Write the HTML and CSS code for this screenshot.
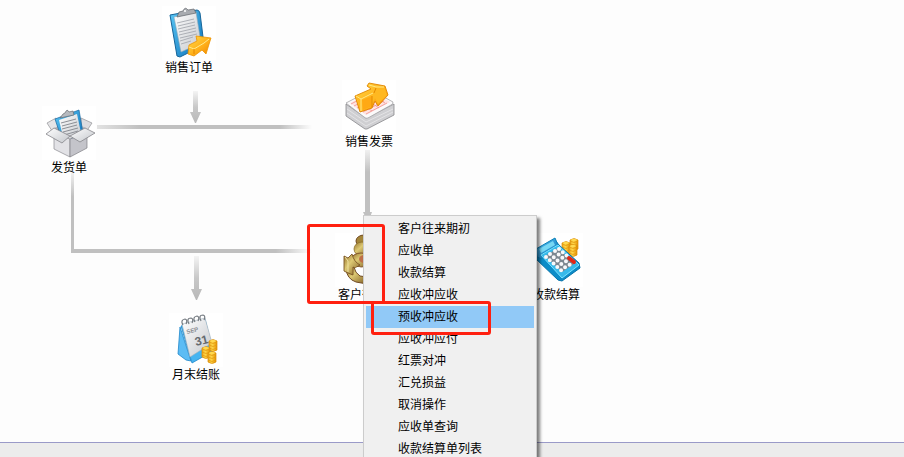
FILE: index.html
```html
<!DOCTYPE html>
<html lang="zh-CN">
<head>
    <meta charset="UTF-8">
    <meta name="viewport" content="width=device-width, initial-scale=1.0">
    <title>销售管理</title>
    <link rel="stylesheet" href="styles.css">
</head>
<body>
    <main class="canvas">
        <!-- Flow lines between the steps -->
        <svg class="connectors" width="620" height="400" aria-hidden="true">
            <defs>
                <linearGradient id="fade-h" gradientUnits="userSpaceOnUse" x1="97" y1="0" x2="312" y2="0">
                    <stop offset="0" stop-color="#e2e2e2"/><stop offset=".2" stop-color="#c0c0c0"/>
                    <stop offset=".85" stop-color="#c0c0c0"/><stop offset="1" stop-color="#fdfdfd"/>
                </linearGradient>
                <linearGradient id="fade-end" gradientUnits="userSpaceOnUse" x1="71" y1="0" x2="312" y2="0">
                    <stop offset=".85" stop-color="#c0c0c0"/><stop offset="1" stop-color="#fdfdfd"/>
                </linearGradient>
                <linearGradient id="fade-v" x1="0" y1="0" x2="0" y2="1">
                    <stop offset="0" stop-color="#f4f4f4"/><stop offset=".5" stop-color="#c8c8c8"/><stop offset="1" stop-color="#b8b8b8"/>
                </linearGradient>
                <linearGradient id="fade-top" x1="0" y1="0" x2="0" y2="1">
                    <stop offset="0" stop-color="#f0f0f0"/><stop offset=".3" stop-color="#c0c0c0"/>
                </linearGradient>
            </defs>
            <rect x="97" y="125" width="215" height="4" fill="url(#fade-h)"/>
            <path d="M193 91h5v21h3l-5 11h-1l-5-11h3z" fill="url(#fade-v)"/>
            <rect x="71" y="173" width="3" height="79" fill="url(#fade-top)"/>
            <rect x="71" y="249" width="241" height="4" fill="url(#fade-end)"/>
            <path d="M194 256h5v33h3l-5 11h-1l-5-11h3z" fill="url(#fade-v)"/>
            <path d="M365 150h5v62h2l-4 11-5-11h2z" fill="url(#fade-top)"/>
        </svg>

        <button type="button" class="node node-order">
            <svg class="icon" viewBox="0 0 54 54" aria-hidden="true">
                <defs>
                    <linearGradient id="blue" x1="0" y1="0" x2="1" y2="1"><stop offset="0" stop-color="#5cc8f6"/><stop offset="1" stop-color="#0a70b8"/></linearGradient>
                    <linearGradient id="paper" x1="0" y1="0" x2="1" y2="1"><stop offset="0" stop-color="#fff"/><stop offset="1" stop-color="#c4c7cc"/></linearGradient>
                    <linearGradient id="orange" x1="0" y1="0" x2="1" y2="1"><stop offset="0" stop-color="#ffdc4a"/><stop offset=".55" stop-color="#ffb01a"/><stop offset="1" stop-color="#f08400"/></linearGradient>
                </defs>
                <path d="M8 9 35 4q2 0 3 3l4 32-24 12-3-1z" fill="url(#blue)" stroke="#16659a"/>
                <path d="m12 11 22-5 5 31-20 9z" fill="url(#paper)" stroke="#8faab9" stroke-width=".6"/>
                <path d="m15 17 17-4M16 20l17-4M16 23l17-4M17 26l17-4M17 29l17-4M18 32l17-4M18 35l13-4M19 38l10-3" stroke="#a6a9b0" stroke-width=".9"/>
                <path d="m15 11 2-5 4-1q2-5 5-1l6-1 2 4z" fill="#a8abb0" stroke="#62666c" stroke-width=".7"/>
                <circle cx="23" cy="5" r="1" fill="#fff"/>
                <path d="m27 39 8-4-1-5 15 2-1 3-4 13-4-4-8 6-6-2z" fill="url(#orange)" stroke="#ee9300" stroke-width=".8"/>
                <path d="m27 41 5 2 10-6 5-4" fill="none" stroke="#ffe98a"/>
                <path d="m32 43v5" stroke="#e38600"/>
            </svg>
            <span class="label">销售订单</span>
        </button>

        <button type="button" class="node node-delivery">
            <svg class="icon" viewBox="0 0 54 54" aria-hidden="true">
                <path d="m5 17 9-5 5 14-7 2z" fill="#e4e4e6" stroke="#929296" stroke-width=".7"/>
                <path d="m39 12 11 5-6 9-5-1z" fill="#dcdce0" stroke="#929296" stroke-width=".7"/>
                <path d="m12 22 16-7 16 7-16 13z" fill="#b5b5bb"/>
                <path d="M13 13 37 4l4 23-14 8-8-4z" fill="url(#blue)" stroke="#1766a0" stroke-width=".7"/>
                <path d="m17 14 18-6 4 19-12 7-6-3z" fill="url(#paper)"/>
                <path d="m19 17 15-4M20 20l15-4M20 23l15-4M21 26l15-4M22 29l14-4" stroke="#8c8f95"/>
                <path d="m18 12 3-4 2-1q2-5 4-1l4-1 1 4z" fill="#b6b9be" stroke="#666a70" stroke-width=".7"/>
                <path d="m12 27 16 6v18l-16-8z" fill="#e2e2e6" stroke="#8b8b90" stroke-width=".7"/>
                <path d="m45 27-17 6v18l17-9z" fill="#c4c4ca" stroke="#808085" stroke-width=".7"/>
                <path d="m12 22 16 8-8 7-16-9z" fill="url(#paper)" stroke="#85858a" stroke-width=".8"/>
                <path d="m43 22 10 5-15 9-10-6z" fill="url(#paper)" stroke="#85858a" stroke-width=".8"/>
            </svg>
            <span class="label">发货单</span>
        </button>

        <button type="button" class="node node-invoice">
            <svg class="icon" viewBox="0 0 54 54" aria-hidden="true">
                <path d="m4 24 20 14 28-14v11L25 49h-2L4 36z" fill="#cfcfd2" stroke="#88888c" stroke-width=".8"/>
                <path d="m5 29 19 13 27-13M5 33l19 13 27-14" fill="none" stroke="#e4e4e6"/>
                <path d="m4 23 25-13 22 12q0 2-2 3L26 38q-2 1-4-1z" fill="#fbfafb" stroke="#a4a4a7" stroke-width=".8"/>
                <path d="m8 23 22-11 18 10-24 13z" fill="#ffe3e1"/>
                <path d="m9 24 21-11M12 26l21-11M15 28l21-11M18 30l21-11M21 32l21-11M24 34l21-11M14 20l16 11M21 17l16 11M28 14l15 9" stroke="#f0908e" stroke-width=".8"/>
                <path d="M13 16 29 9l-4-3 2-3 16 3 3 9-10 11-3-5-3 7-12 4z" fill="url(#orange)" stroke="#e18600" stroke-width=".9"/>
                <path d="m14 16 5 2 13-6 2-5 8 0 3 8-9 9-3-6-4 9-10 4z" fill="#ffb821"/>
                <path d="m14 16 5 3 12-6M19 19l0 12M27 5l7 2 8 0" fill="none" stroke="#ffe987"/>
                <path d="m20 20 10-4v10l-9 4z" fill="#ffa914"/>
                <path d="m30 16v11M34 8l-2 5" stroke="#e58a00"/>
            </svg>
            <span class="label">销售发票</span>
        </button>

        <button type="button" class="node node-customer">
            <svg class="icon" viewBox="0 0 54 54" aria-hidden="true">
                <defs>
                    <linearGradient id="bronze" x1="0" y1="0" x2="1" y2="1"><stop offset="0" stop-color="#94712c"/><stop offset=".4" stop-color="#ddc974"/><stop offset="1" stop-color="#7d5a20"/></linearGradient>
                </defs>
                <ellipse cx="29" cy="8" rx="8" ry="6" fill="#a38539" stroke="#70481f"/>
                <ellipse cx="27" cy="16" rx="8" ry="7" fill="url(#bronze)" stroke="#8d7028" stroke-width=".8"/>
                <path d="M11 36q1 10 10 13l11 2v-7l-7-1q-5-3-6-9z" fill="url(#bronze)" stroke="#704a24"/>
                <ellipse cx="26" cy="27" rx="10" ry="7" fill="url(#bronze)" stroke="#7b4c26" stroke-width=".9"/>
                <path d="M9 23l4 2 4-4q2 8 8 11l-5 3-2-1v8l-5-2-4-2z" fill="url(#bronze)" stroke="#7b5524" stroke-width=".9"/>
                <path d="m10 24 3 4v11" fill="none" stroke="#f0e2a0"/>
                <ellipse cx="29" cy="26" rx="5" ry="4" fill="#bf7048"/>
                <path d="m20 35 4-1 4 2 3-1v7h-6z" fill="#fff"/>
            </svg>
            <span class="label">客户往来</span>
        </button>

        <button type="button" class="node node-receipt">
            <svg class="icon" viewBox="0 0 54 54" aria-hidden="true">
                <defs>
                    <linearGradient id="gold" x1="0" y1="0" x2="1" y2="0"><stop offset="0" stop-color="#eaa31a"/><stop offset=".4" stop-color="#ffd94c"/><stop offset="1" stop-color="#e59000"/></linearGradient>
                    <g id="coins">
                        <path d="M0 2q4-3 8 0v9q-4 3-8 0z" fill="url(#gold)" stroke="#da8c08" stroke-width=".7"/>
                        <path d="M0 3q4 3 8 0M0 6q4 3 8 0M0 9q4 3 8 0" fill="none" stroke="#e39a10" stroke-width=".8"/>
                        <ellipse cx="4" cy="2" rx="3" ry="1" fill="#ffda52"/>
                    </g>
                </defs>
                <use href="#coins" x="41" y="5"/>
                <use href="#coins" x="33" y="8"/>
                <use href="#coins" x="40" y="11"/>
                <path d="m7 19 19-12 4 5 20 18 1 5-18 13-4-1L7 26z" fill="#0c8cc8" stroke="#0874ab"/>
                <path d="M7 16 26 5l3 7-16 9 0 5-5-2z" fill="url(#blue)" stroke="#0c83b9"/>
                <path d="m10 16 14-8 2 4-14 8z" fill="#77d8f4"/>
                <path d="m12 22 17-10 21 20-17 13z" fill="#36b9ea" stroke="#7ae2ff"/>
                <path d="m16 23 13-8 16 16-12 8z" fill="#7c8790"/>
                <g stroke="#f8f8fa" stroke-width="4" stroke-linecap="round" stroke-dasharray="0 5">
                    <path d="m17 24 16 14M21 21l16 14M26 18l15 14M30 16l8 7"/>
                </g>
                <path d="m40 25 5 4" stroke="#e22516" stroke-width="4" stroke-linecap="round"/>
            </svg>
            <span class="label">收款结算</span>
        </button>

        <button type="button" class="node node-closing">
            <svg class="icon" viewBox="0 0 54 54" aria-hidden="true">
                <path d="m11 14 11 34-5-1-8-6z" fill="#5cbcf4" stroke="#1e88cc" stroke-width=".8"/>
                <path d="m12 13 24-7 8 32-21 12z" fill="#46b4f0" stroke="#1e88cc" stroke-width=".8"/>
                <path d="m13 11 23-6 7 25-22 14z" fill="url(#paper)" stroke="#a2b2be" stroke-width=".6"/>
                <g fill="none" stroke="#747a80" stroke-width="1.2">
                    <path d="M14 12q-3-5 2-6 3 1 1 5M20 11q-3-6 2-6 3 1 1 5M26 9q-3-5 2-6 3 1 1 5M32 8q-3-6 2-6 3 1 1 5"/>
                </g>
                <text class="month" x="18" y="21" transform="rotate(-14 18 21)">SEP</text>
                <text class="day" x="27" y="33" transform="rotate(-14 27 33)">31</text>
                <use href="#coins" x="40" y="26"/>
                <use href="#coins" x="33" y="33"/>
                <use href="#coins" x="39" y="38"/>
            </svg>
            <span class="label">月末结账</span>
        </button>
    </main>

    <footer class="statusbar"></footer>

    <ul class="context-menu">
        <li><button type="button">客户往来期初</button></li>
        <li><button type="button">应收单</button></li>
        <li><button type="button">收款结算</button></li>
        <li><button type="button">应收冲应收</button></li>
        <li><button type="button" class="active">预收冲应收</button></li>
        <li><button type="button">应收冲应付</button></li>
        <li><button type="button">红票对冲</button></li>
        <li><button type="button">汇兑损益</button></li>
        <li><button type="button">取消操作</button></li>
        <li><button type="button">应收单查询</button></li>
        <li><button type="button">收款结算单列表</button></li>
    </ul>

    <!-- Red marks over the steps to click -->
    <div class="mark mark-node"></div>
    <div class="mark mark-item"></div>
</body>
</html>
```
FILE: styles.css
```css
body {
    position: relative;
    display: flex;
    flex-direction: column;
    height: 100vh;
    margin: 0;
    overflow: hidden;
    background-color: #fdfdfd;
    color: #000;
    font-family: "Liberation Sans", "Noto Sans CJK SC", sans-serif;
    font-size: 12px;
}
button {
    border: none;
    padding: 0;
    background: none;
    color: inherit;
    font: inherit;
    cursor: pointer;
}
.canvas {
    position: relative;
    flex: 1;
}
.connectors {
    position: absolute;
    top: 0;
    left: 0;
}
.statusbar {
    height: 14px;
    border-top: 1px solid #9a9ac8;
    background-color: #ececec;
}

/* Diagram steps */
.node {
    position: absolute;
    display: flex;
    flex-direction: column;
    align-items: center;
    width: 80px;
}
.icon {
    width: 54px;
    height: 54px;
    background-color: #fff;
}
.label {
    line-height: 16px;
}
.month {
    font-size: 6px;
    font-weight: bold;
    fill: #8a8d92;
}
.day {
    font-size: 12px;
    font-weight: bold;
    fill: #666a70;
}
.node-order {
    left: 149px;
    top: 6px;
}
.node-delivery {
    left: 29px;
    top: 106px;
}
.node-invoice {
    left: 329px;
    top: 80px;
}
.node-customer {
    left: 322px;
    top: 233px;
}
.node-receipt {
    left: 516px;
    top: 233px;
}
.node-closing {
    left: 156px;
    top: 313px;
}

/* Context menu */
.context-menu {
    position: absolute;
    left: 363px;
    top: 215px;
    box-sizing: border-box;
    width: 174px;
    margin: 0;
    padding: 2px;
    border: 1px solid #ccc;
    background-color: #f0f0f0;
    box-shadow: 3px 3px 3px rgba(0, 0, 0, 0.5);
    list-style: none;
}
.context-menu button {
    display: block;
    width: 100%;
    height: 22px;
    padding-left: 32px;
    line-height: 22px;
    text-align: left;
}
.context-menu .active,
.context-menu button:hover {
    background-color: #91c9f7;
}

.mark {
    position: absolute;
    box-sizing: border-box;
    border: 3px solid #ff2010;
    border-radius: 3px;
    pointer-events: none;
}
.mark-node {
    left: 307px;
    top: 224px;
    width: 78px;
    height: 80px;
}
.mark-item {
    left: 371px;
    top: 301px;
    width: 120px;
    height: 34px;
}
```
